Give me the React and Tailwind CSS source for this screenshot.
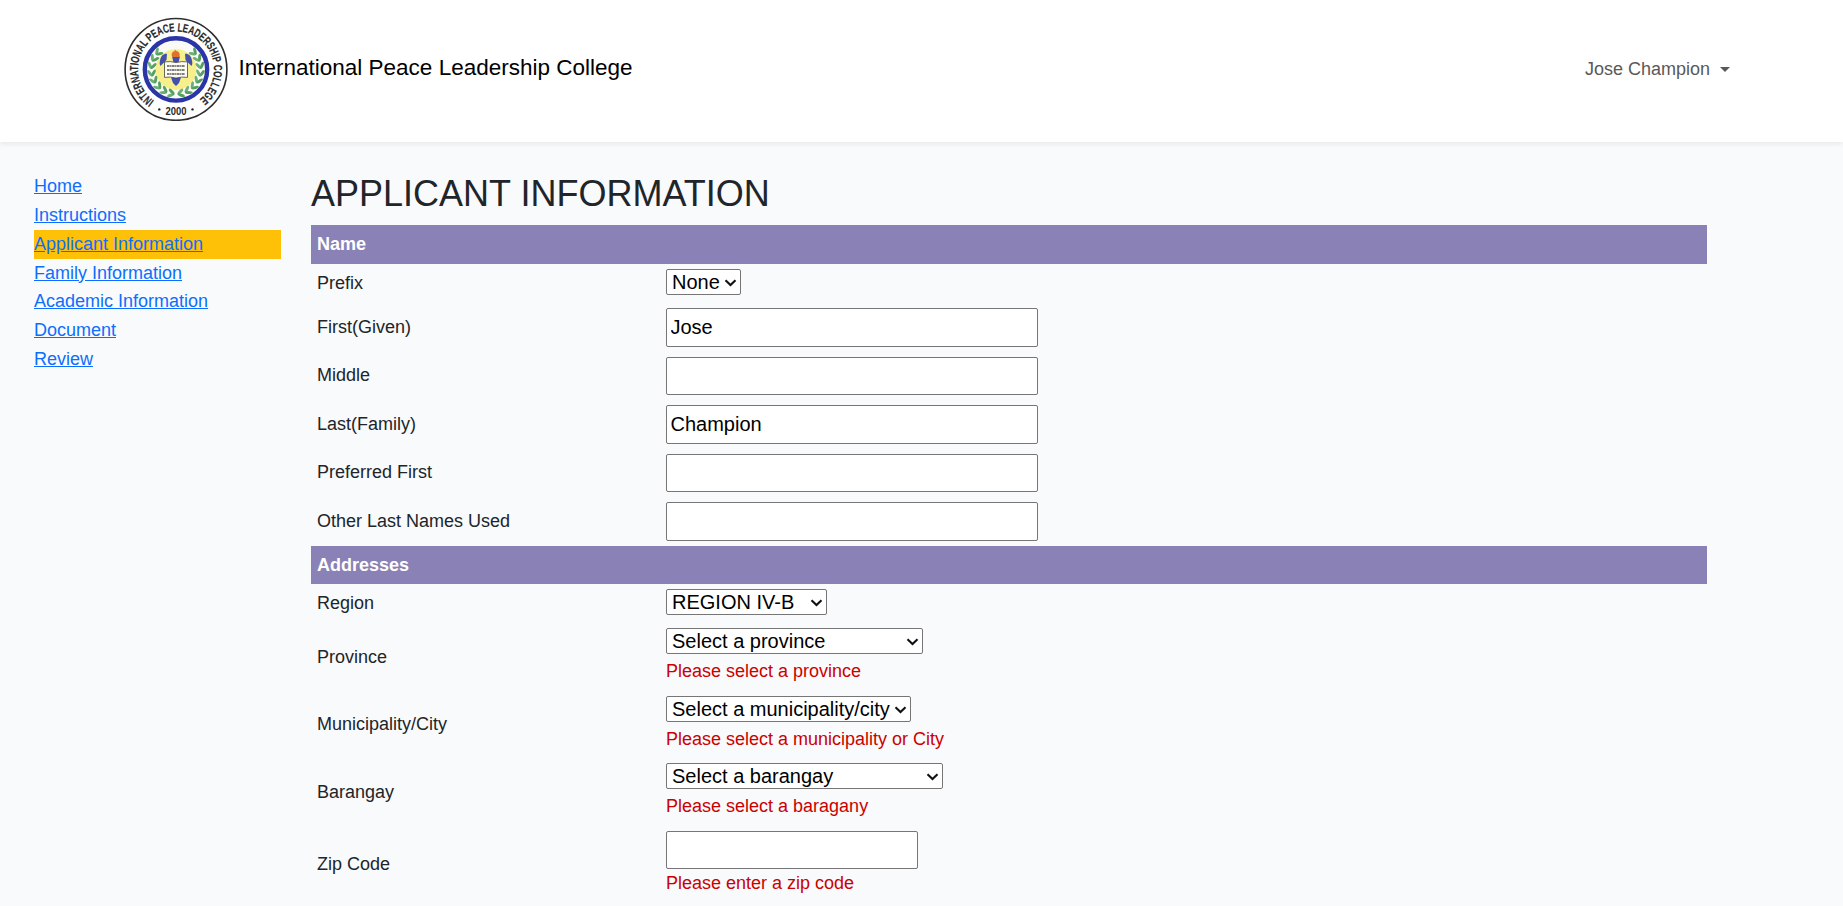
import React from "react";

const NAV = [
  "Home",
  "Instructions",
  "Applicant Information",
  "Family Information",
  "Academic Information",
  "Document",
  "Review",
];

const leaves = Array.from({ length: 8 }, (_, i) => 14 + i * 17.5);

function Leaf({ angle, side }) {
  const t = (angle * Math.PI) / 180;
  const x = 52 + side * Math.sin(t) * 24.5;
  const y = 52 + Math.cos(t) * 24.5;
  return (
    <g transform={`translate(${x} ${y}) rotate(${side * (90 - angle)})`}>
      <ellipse cx="-2.2" cy="0" rx="1.5" ry="3.8" fill="#6bb078" transform="rotate(-32)" />
      <ellipse cx="2.2" cy="0" rx="1.5" ry="3.8" fill="#55a060" transform="rotate(32)" />
    </g>
  );
}

function Seal() {
  return (
    <svg className="h-[104px] w-[104px] shrink-0" viewBox="0 -0.4 104 104" aria-label="College seal">
      <defs>
        <path id="ring" d="M 30.2 83.2 A 38 38 0 1 1 73.8 83.2" />
      </defs>
      <circle cx="52" cy="52" r="50.9" fill="#fff" stroke="#2e2e2e" strokeWidth="1.6" />
      <text
        fontFamily="Liberation Sans, Arial, sans-serif"
        fontWeight="700"
        fontSize="11.8"
        fill="#2a2a2a"
        stroke="#2a2a2a"
        strokeWidth=".2"
      >
        <textPath href="#ring" textLength="190" lengthAdjust="spacingAndGlyphs">
          INTERNATIONAL PEACE LEADERSHIP COLLEGE
        </textPath>
      </text>
      <text
        x="41.5"
        y="98"
        textLength="21"
        lengthAdjust="spacingAndGlyphs"
        fontFamily="Liberation Sans, Arial, sans-serif"
        fontWeight="700"
        fontSize="11"
        fill="#2a2a2a"
      >
        2000
      </text>
      <circle cx="35.3" cy="92" r="1.2" fill="#222" />
      <circle cx="68.5" cy="92" r="1.2" fill="#222" />
      <circle cx="52" cy="52" r="31.2" fill="#fafbf6" stroke="#2b35a8" strokeWidth="4.4" />
      <circle cx="52" cy="52" r="20.5" fill="#f7ef8c" />
      <path d="M36 43c1-5 4-7 7-6.500l-.5 6-6 6c-1-1.500-1-3.500-.5-5.500z" fill="#4450ae" />
      <path d="M68 43c-1-5-4-7-7-6.500l.5 6 6 6c1-1.500 1-3.500.5-5.500z" fill="#4450ae" />
      {leaves.map((a) => (
        <g key={a}>
          <Leaf angle={a} side={-1} />
          <Leaf angle={a} side={1} />
        </g>
      ))}
      <path d="M48 39h8l-1.500 6h-5zM47 60h10l-2 5.500-3 3-3-3z" fill="#4450ae" />
      <path d="M48.500 39.500c-2-3 0-4.500 1-6 0 1 1 1.500 1.200-1.200 2 1 2.300 2.200 2.500 1.200 3 2 3 4 1.800 6z" fill="#e0702c" />
      <path d="M40.500 44.500q6-1 11.500.7 5.500-1.700 11.500-.7v15.500q-6-1-11.500.7-5.500-1.700-11.500-.7z" fill="#fdfcf3" stroke="#444" strokeWidth=".8" />
      <path d="M43 48.500h18M43 52.500h18M43 56.500h18" stroke="#555" strokeWidth="1.500" strokeDasharray="2.600 .5 1.400 .5" />
    </svg>
  );
}

function Select({ value, width }) {
  return (
    <div className={`grid h-[26px] shrink-0 ${width}`}>
      <select
        className="col-start-1 row-start-1 h-[26px] w-full appearance-none rounded-[2px] border border-[#767676] bg-white pl-[5px] text-[20px] leading-6 text-black"
        defaultValue={value}
      >
        <option>{value}</option>
      </select>
      <svg
        className="pointer-events-none col-start-1 row-start-1 mt-px mr-[4.5px] h-[8px] w-[13px] self-center justify-self-end"
        viewBox="0 0 13 8"
      >
        <path d="M1.500 1.200 6.500 6 11.500 1.200" fill="none" stroke="#111" strokeWidth="2.100" />
      </svg>
    </div>
  );
}

function Input({ value = "", size }) {
  return (
    <input
      className={`block shrink-0 rounded-[2px] border border-[#767676] bg-white px-[3.5px] text-[20px] text-black ${size}`}
      defaultValue={value}
    />
  );
}

function SectionBar({ title, height }) {
  return (
    <div className={`flex w-[1396px] items-center bg-[#8a82b6] pl-1.5 font-bold text-white ${height}`}>
      {title}
    </div>
  );
}

function Row({ label, height, labelPad = "", error, errorGap = "", children }) {
  return (
    <div className={`flex pl-1.5 ${height}`}>
      <div className={`flex w-[349px] items-center ${labelPad}`}>{label}</div>
      <div className="flex flex-col pt-[5px]">
        {children}
        {error && <p className={`text-[#cc0000] ${errorGap}`}>{error}</p>}
      </div>
    </div>
  );
}

export default function App() {
  return (
    <div className="h-[906px] overflow-hidden bg-[#f8fafc] font-['Liberation_Sans',Arial,sans-serif] text-[18px] leading-[28px] text-[#212529]">
      <header className="flex h-[142px] items-start justify-between bg-white pt-[17px] pr-[113px] pl-[124px] shadow-[0_2px_5px_rgba(0,0,0,0.075)]">
        <div className="flex">
          <Seal />
          <span className="mt-[34px] ml-[10.5px] text-[22.5px] leading-[34px] text-black">
            International Peace Leadership College
          </span>
        </div>
        <div className="mt-[38px] flex items-center text-[#595959]">
          Jose Champion
          <svg className="mt-px ml-[10px] h-[5px] w-[10px]" viewBox="0 0 10 5">
            <path d="M0 0h10L5 5z" fill="#595959" />
          </svg>
        </div>
      </header>

      <div className="flex">
        <nav className="mt-[30.15px] ml-[34px] w-[247px] shrink-0 leading-[28.8px]">
          {NAV.map((item) => (
            <div key={item} className={item === "Applicant Information" ? "bg-[#ffc107]" : ""}>
              <a href="#" className="text-[#0d6efd] underline">
                {item}
              </a>
            </div>
          ))}
        </nav>

        <main className="ml-[30px]">
          <h1 className="mt-[30px] mb-[10px] text-[36px] leading-[43px]">APPLICANT INFORMATION</h1>
          <SectionBar title="Name" height="h-[39px] pb-px" />
          <Row label="Prefix" height="h-[39px]" labelPad="pb-px">
            <Select value="None" width="w-[75px]" />
          </Row>
          <Row label="First(Given)" height="h-[49px]" labelPad="pb-px">
            <Input value="Jose" size="h-[39px] w-[372px]" />
          </Row>
          <Row label="Middle" height="h-[48px]" labelPad="pb-0.5">
            <Input size="h-[38px] w-[372px]" />
          </Row>
          <Row label="Last(Family)" height="h-[49px]" labelPad="pb-px">
            <Input value="Champion" size="h-[39px] w-[372px]" />
          </Row>
          <Row label="Preferred First" height="h-[48px]" labelPad="pb-0.5">
            <Input size="h-[38px] w-[372px]" />
          </Row>
          <Row label="Other Last Names Used" height="h-[49px]" labelPad="pb-px">
            <Input size="h-[39px] w-[372px]" />
          </Row>
          <SectionBar title="Addresses" height="h-[38px]" />
          <Row label="Region" height="h-[39px]" labelPad="pb-px">
            <Select value="REGION IV-B" width="w-[161px]" />
          </Row>
          <Row label="Province" height="h-[68px]" error="Please select a province" errorGap="mt-[3px]">
            <Select value="Select a province" width="w-[257px]" />
          </Row>
          <Row
            label="Municipality/City"
            height="h-[67px]"
            labelPad="pb-px"
            error="Please select a municipality or City"
            errorGap="mt-[3px]"
          >
            <Select value="Select a municipality/city" width="w-[245px]" />
          </Row>
          <Row label="Barangay" height="h-[68px]" error="Please select a baragany" errorGap="mt-[3px]">
            <Select value="Select a barangay" width="w-[277px]" />
          </Row>
          <Row label="Zip Code" height="h-[76px]" error="Please enter a zip code">
            <Input size="h-[38px] w-[252px]" />
          </Row>
        </main>
      </div>
    </div>
  );
}
